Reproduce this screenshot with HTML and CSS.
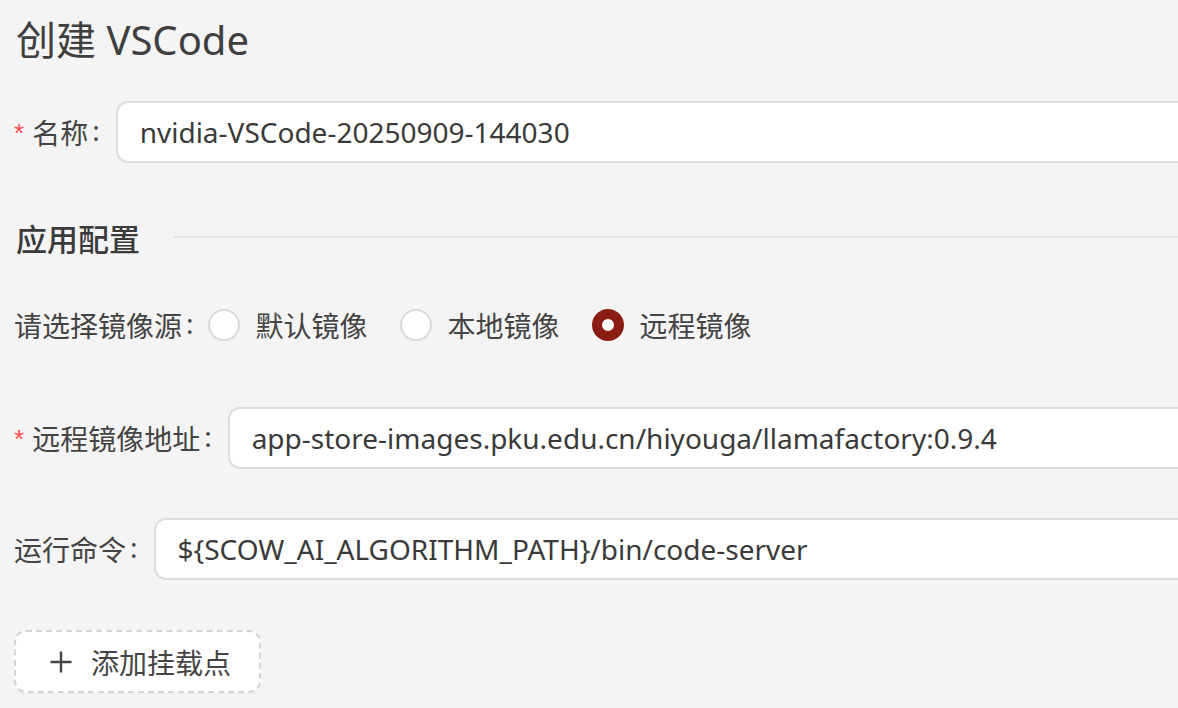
FILE: index.html
```html
<!DOCTYPE html>
<html lang="zh-CN">
<head>
<meta charset="utf-8">
<title>创建 VSCode</title>
<link rel="stylesheet" href="styles.css">
</head>
<body>
<div class="page">
  <h1 class="title">创建 VSCode</h1>

  <div class="form-item item-name">
    <label class="label"><span class="req">*</span>名称<span class="colon">:</span></label>
    <div class="control"><div class="input">nvidia-VSCode-20250909-144030</div></div>
  </div>

  <div class="divider">
    <span class="divider-text">应用配置</span>
    <span class="divider-line"></span>
  </div>

  <div class="form-item item-radio">
    <label class="label">请选择镜像源<span class="colon">:</span></label>
    <div class="radio-group">
      <span class="radio"><span class="radio-dot"></span><span class="radio-text">默认镜像</span></span>
      <span class="radio"><span class="radio-dot"></span><span class="radio-text">本地镜像</span></span>
      <span class="radio checked"><span class="radio-dot"></span><span class="radio-text">远程镜像</span></span>
    </div>
  </div>

  <div class="form-item item-remote">
    <label class="label"><span class="req">*</span>远程镜像地址<span class="colon">:</span></label>
    <div class="control"><div class="input">app-store-images.pku.edu.cn/hiyouga/llamafactory:0.9.4</div></div>
  </div>

  <div class="form-item item-cmd">
    <label class="label">运行命令<span class="colon">:</span></label>
    <div class="control"><div class="input">${SCOW_AI_ALGORITHM_PATH}/bin/code-server</div></div>
  </div>

  <button class="add-btn" type="button">
    <svg class="plus" width="24" height="24" viewBox="0 0 24 24" aria-hidden="true">
      <path d="M12 1.5V22.5M1.5 12H22.5" stroke="#444" stroke-width="2.4" fill="none"/>
    </svg>
    <span>添加挂载点</span>
  </button>
</div>
</body>
</html>
```

FILE: styles.css
```css
html, body {
  margin: 0;
  padding: 0;
  background: #f4f4f4;
  overflow: hidden;
}
body {
  width: 1178px;
  height: 708px;
  font-family: "Noto Sans", "Noto Sans CJK SC", sans-serif;
  color: #444;
}
.page {
  width: 1400px;
  padding: 0 0 0 16px;
}
.title {
  margin: 0;
  height: 80px;
  line-height: 80px;
  font-size: 40px;
  font-weight: 400;
  color: #3f3f3f;
}
.form-item {
  display: flex;
  align-items: center;
  height: 62px;
}
.item-name { margin-top: 21px; }
.item-radio { margin-top: 37px; }
.item-remote { margin-top: 51px; }
.item-cmd { margin-top: 49px; }
.label {
  display: flex;
  align-items: center;
  font-size: 28px;
  white-space: nowrap;
  color: #444;
  margin-left: -2px;
}
.req {
  color: #ff4d4f;
  font-size: 26px;
  margin-right: 8px;
  font-family: "Liberation Sans", sans-serif;
  position: relative;
  top: 1px;
}
.colon {
  margin: 0 16px 0 4px;
  position: relative;
  top: -2px;
}
.item-radio .colon {
  margin-right: 14px;
}
.control {
  flex: 1;
  min-width: 0;
}
.input {
  box-sizing: border-box;
  height: 62px;
  background: #fff;
  border: 2px solid #dcdcdc;
  border-radius: 12px;
  padding: 0 22px;
  font-size: 28px;
  line-height: 58px;
  color: #3a3a3a;
  white-space: nowrap;
}
.divider {
  display: flex;
  align-items: center;
  height: 40px;
  margin-top: 54px;
}
.divider-text {
  font-size: 31px;
  font-weight: 500;
  color: #3a3a3a;
  padding-right: 34px;
  white-space: nowrap;
}
.divider-line {
  flex: 1;
  height: 2px;
  background: #e3e3e3;
}
.radio-group {
  display: flex;
  align-items: center;
}
.radio {
  display: flex;
  align-items: center;
  margin-right: 32px;
}
.radio-dot {
  box-sizing: border-box;
  width: 32px;
  height: 32px;
  border-radius: 50%;
  border: 2px solid #d9d9d9;
  background: #fff;
}
.radio.checked .radio-dot {
  border: 10px solid #8c1c13;
  background: #fff;
}
.radio-text {
  font-size: 28px;
  padding-left: 16px;
  color: #444;
}
.add-btn {
  display: flex;
  align-items: center;
  box-sizing: border-box;
  margin-top: 50px;
  margin-left: -2px;
  width: 247px;
  height: 63px;
  padding: 0 0 0 33px;
  background: #fff;
  border: 2px dashed #d4d4d4;
  border-radius: 12px;
  font-family: inherit;
  font-size: 28px;
  color: #444;
  box-shadow: 0 2px 0 rgba(0, 0, 0, 0.02);
}
.plus {
  margin-right: 18px;
}
```
